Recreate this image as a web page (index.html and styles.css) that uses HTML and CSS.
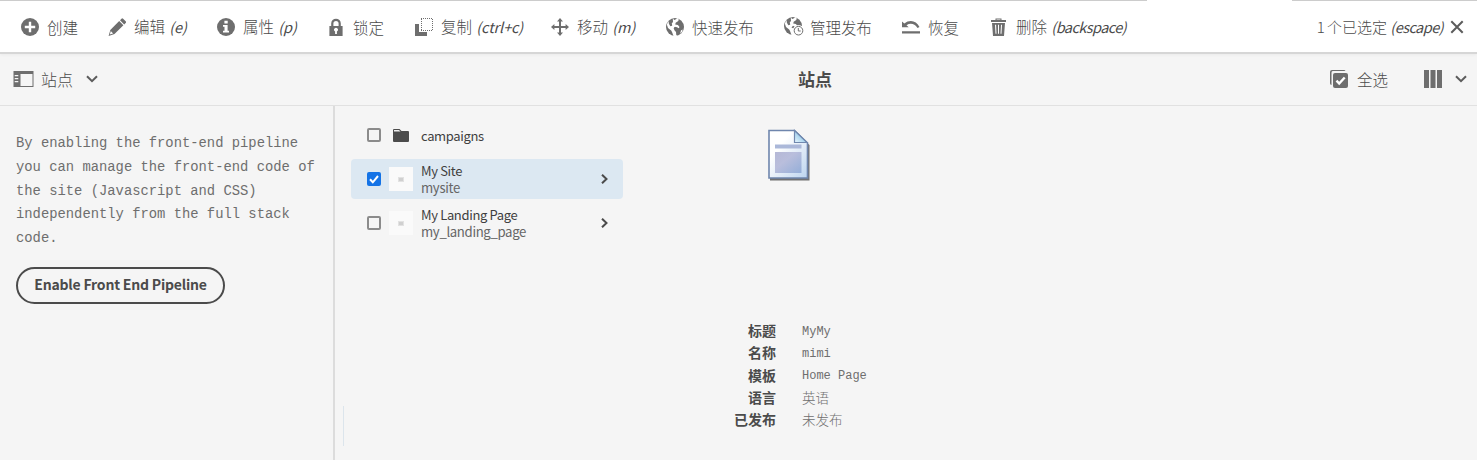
FILE: index.html
```html
<!DOCTYPE html>
<html lang="zh-CN">
<head>
<meta charset="utf-8">
<title>站点</title>
<link rel="stylesheet" href="styles.css">
</head>
<body>
<header class="actions">
  <nav class="action-list">
    <a class="action"><svg class="icon" viewBox="0 0 18 18"><circle cx="9" cy="9" r="9"/><path class="cut" d="M9 3.800v10.400M3.800 9h10.400"/></svg><span>创建</span></a>
    <a class="action"><svg class="icon" viewBox="0 0 18 18"><path d="M13.500.7q.8-.7 1.600.1l2.600 2.500q.7.8 0 1.600l-1.500 1.500-4.200-4.200zM11.200 3l4.200 4.200-8.900 8.900L.6 18l1.700-6zM2.800 13.100l-1 3.400 3.300-1.100z" fill-rule="evenodd"/></svg><span>编辑 <i>(e)</i></span></a>
    <a class="action"><svg class="icon" viewBox="0 0 18 18"><circle cx="9" cy="9" r="9"/><path class="white" d="M7.400 2.800h3.300v2.800H7.400zM6 7h4.600v5.700H12v1.700H6v-1.700h1.500V8.700H6z"/></svg><span>属性 <i>(p)</i></span></a>
    <a class="action"><svg class="icon" viewBox="0 0 18 18"><path d="M2.400 8h1.800V5.500a4.800 4.800 0 0 1 9.600 0V8h1.800v10H2.400zm4-0h5.200V5.600a2.600 2.600 0 0 0-5.200 0zm1.700 5.400V16h1.800v-2.600a1.900 1.900 0 1 0-1.800 0z" fill-rule="evenodd"/></svg><span>锁定</span></a>
    <a class="action"><svg class="icon" viewBox="0 0 18 18"><path d="M0 6h4v8h8v4H0z"/><path class="dots" d="M6 .5h12M6 12.500h12M6.500 1v12M17.500 1v12"/></svg><span>复制 <i>(ctrl+c)</i></span></a>
    <a class="action"><svg class="icon" viewBox="0 0 18 18"><path d="M9 0l3 3.400h-2V8h4.600V6L18 9l-3.400 3v-2H10v4.600h2L9 18l-3-3.400h2V10H3.400v2L0 9l3.400-3v2H8V3.400H6z"/></svg><span>移动 <i>(m)</i></span></a>
    <a class="action"><svg class="icon" viewBox="0 0 18 18"><circle cx="9" cy="9" r="9"/><path class="white" d="M6.800.3L8.200 2 10 1.300 11.300 0 12.800.8l-.5 2.200-2.600 1.800-.5 1.700 2.700.6 1.600 2-1 1.500L9 8.800 7.500 10.400l2 1.200 3 .2-1.300 2.200-.3 4H7.500L6 14l-.8-1.500L2 10 .8 6.500 2.500 3l.4 2.700 1.400 2.500 1.900-.5L5.800 5 7 4.200z"/><path d="M8 9.500l3-.2 3.300 2.100-1.300 3L10.300 17.500 10 14 8.200 12z"/><path class="white" d="M15 12.200l1.800-.8-.8 2.300-2 2.200z"/></svg><span>快速发布</span></a>
    <a class="action"><svg class="icon wide" viewBox="0 0 20 19"><circle cx="9" cy="9" r="9"/><path class="white" d="M6.800.3L8.200 2 10 1.300 11.300 0 12.800.8l-.5 2.200-2.600 1.800-.5 1.700 2.700.6 1.600 2-1 1.500L9 8.800 7.500 10.400l2 1.200 3 .2-1.300 2.200-.3 4H7.500L6 14l-.8-1.500L2 10 .8 6.500 2.500 3l.4 2.700 1.400 2.500 1.900-.5L5.800 5 7 4.200z"/><circle class="white" cx="14.500" cy="13.700" r="5.800"/><circle class="line" cx="14.500" cy="13.700" r="4.300"/><path class="line" d="M14.300 11v3h2.400"/></svg><span>管理发布</span></a>
    <a class="action"><svg class="icon" viewBox="0 0 18 18"><path d="M0 3.500l2.300 1.900C7.500 1.200 14.500 2.300 17.500 9l-2 1C12.500 5.500 8.300 4.700 4.500 7.300l2.200 2H0zM0 13.200h18v2.300H0z"/></svg><span>恢复</span></a>
    <a class="action"><svg class="icon" viewBox="0 0 18 18"><path d="M1 2h4.500V.5h6V2H16v2H1zm5.500-.6V2h4v-.6zM2 5h13l-1 13H3zM5 6.800l.5 9h1l-.4-9zm3 0v9h1v-9zm3 0l-.5 9h1l.5-9z" fill-rule="evenodd"/></svg><span>删除 <i class="long">(backspace)</i></span></a>
  </nav>
  <div class="selection"><span>1 个已选定 <i class="long">(escape)</i></span><svg class="close" viewBox="0 0 14 14"><path d="M1.300 1.300l11.400 11.400M12.700 1.300L1.300 12.700"/></svg></div>
</header>
<div class="titlebar">
  <div class="rail-toggle"><svg class="rail-icon" viewBox="0 0 20 16"><path d="M0 0h20v16H0zM7 3v12h12V3zM1.200 4v1.200h3.600V4zm0 3v1.200h3.600V7zm0 3v1.200h3.600V10z" fill-rule="evenodd"/></svg><span>站点</span><svg class="chevron" viewBox="0 0 12 8"><path d="M1 1.200l5 5 5-5"/></svg></div>
  <h1 class="title">站点</h1>
  <div class="view-tools"><svg class="icon" viewBox="0 0 18 18"><path d="M2 0h12a2 2 0 0 1 1.500 1H2.800A1.800 1.800 0 0 0 1.500 2.800V15A2 2 0 0 1 0 13V2a2 2 0 0 1 2-2z"/><rect x="3" y="3" width="15" height="15" rx="2"/><path class="tick" d="M6.500 10.700l2.700 2.800 5.500-6"/></svg><span class="all">全选</span><svg class="columns-icon" viewBox="0 0 18 18"><path d="M0 0h5v18H0zM6.500 0h5v18h-5zM13 0h5v18h-5z"/></svg><svg class="chevron" viewBox="0 0 12 8"><path d="M1 1.200l5 5 5-5"/></svg></div>
</div>
<main class="content">
  <aside class="rail">
    <p class="notice">By enabling the front-end pipeline<br>you can manage the front-end code of<br>the site (Javascript and CSS)<br>independently from the full stack<br>code.</p>
    <button class="enable">Enable Front End Pipeline</button>
  </aside>
  <section class="column">
    <div class="row"><span class="check"></span><svg class="folder" viewBox="0 0 16 13"><path d="M0 1Q0 0 1 0h5.500l2 2H15q1 0 1 1v9q0 1-1 1H1q-1 0-1-1z"/><path class="flap" d="M1 1h5l1.500 1.500H1z"/></svg><span class="name">campaigns</span></div>
    <div class="row selected"><span class="check on"><svg viewBox="0 0 14 14"><path d="M3 7.300l2.800 3L11 4"/></svg></span><span class="thumb"><b></b></span><span class="name">My Site<small>mysite</small></span><svg class="next" viewBox="0 0 7 10"><path d="M1 .7L5.500 5 1 9.300"/></svg></div>
    <div class="row"><span class="check"></span><span class="thumb"><b></b></span><span class="name">My Landing Page<small>my_landing_page</small></span><svg class="next" viewBox="0 0 7 10"><path d="M1 .7L5.500 5 1 9.300"/></svg></div>
    <div class="resize-mark"></div>
  </section>
  <section class="detail">
    <svg class="page-icon" viewBox="0 0 44 54">
      <defs>
        <linearGradient id="paper" x1="0" y1="0" x2="1" y2="1"><stop offset=".3" stop-color="#fff"/><stop offset="1" stop-color="#bcd4ee"/></linearGradient>
        <linearGradient id="block" x1="0" y1="0" x2="1" y2="1"><stop stop-color="#b5b8d6"/><stop offset=".4" stop-color="#b9bedc"/><stop offset="1" stop-color="#94aed8"/></linearGradient>
        <linearGradient id="fold" x1="0" y1="1" x2="1" y2="0"><stop stop-color="#eaf8ff"/><stop offset="1" stop-color="#5ba8d8"/></linearGradient>
      </defs>
      <path d="M3 3h25l14.500 13v35.500H3z" fill="#444" opacity=".75"/>
      <path d="M2 1.500h25.500l13 12.500v35h-38.500z" fill="url(#paper)" stroke="#6f86ad" stroke-width="1.600"/>
      <path d="M27.500 1.500V13.500h12.500z" fill="url(#fold)" stroke="#7088ae" stroke-width="1.200"/>
      <path d="M8 15.500h26.500v4H8z" fill="#abb8d9"/><path d="M8 23h26.500v21H8z" fill="url(#block)"/>
    </svg>
    <dl class="facts">
      <dt>标题</dt><dd>MyMy</dd>
      <dt>名称</dt><dd>mimi</dd>
      <dt>模板</dt><dd>Home Page</dd>
      <dt>语言</dt><dd class="zh">英语</dd>
      <dt>已发布</dt><dd class="zh">未发布</dd>
    </dl>
  </section>
</main>
</body>
</html>
```
FILE: styles.css
```css
* { box-sizing: border-box; }
body {
  margin: 0;
  width: 1477px;
  height: 460px;
  overflow: hidden;
  display: flex;
  flex-direction: column;
  background: #f5f5f5;
  color: #4b4b4b;
  font: 300 15.5px/20px "Noto Sans CJK SC", sans-serif;
}
svg { display: block; flex: none; fill: #6e6e6e; }
.actions {
  position: relative;
  height: 54px;
  flex: none;
  display: flex;
  justify-content: space-between;
  align-items: center;
  padding: 1px 13px 0 21px;
  background: linear-gradient(90deg, #ccc 1147px, #fff 1147px 1292px, #ccc 1292px) top / 100% 1px no-repeat, #fff;
  border-bottom: 2px solid #d6d6d6;
  box-shadow: 0 1px 3px #0000000c;
}
.action-list {
  display: grid;
  grid-template-columns: 87px 109px 110px 88px 136px 115px 118px 118px 88px auto;
}
.action { display: flex; align-items: center; gap: 8px; white-space: nowrap; }
.action span { letter-spacing: -.05px; }
.icon { width: 18px; height: 18px; }
.wide { width: 20px; height: 19px; margin-right: -2px; }
i { font-size: 14.5px; font-weight: 400; letter-spacing: -.1px; margin-left: 1px; }
.action .long, .selection .long { letter-spacing: -.55px; }
.cut, .tick { fill: none; stroke: #fff; stroke-width: 2.4; }
.white { fill: #fff; }
.line { fill: none; stroke: #6e6e6e; stroke-width: 1; }
.dots { fill: none; stroke: #6e6e6e; stroke-dasharray: 1 1; }
.selection { display: flex; align-items: center; gap: 7px; font-size: 15px; word-spacing: -1px; }
.close { width: 14px; height: 14px; fill: none; stroke: #5c5c5c; stroke-width: 2; }
.titlebar {
  height: 52px;
  flex: none;
  display: grid;
  grid-template-columns: 798px auto 1fr;
  align-items: center;
  padding: 0 10px 2px 0;
  border-bottom: 1px solid #e1e1e1;
}
.rail-toggle, .view-tools { display: flex; align-items: center; }
.rail-toggle { padding: 1px 0 0 13px; font-size: 16px; }
.rail-icon { width: 21px; height: 16px; margin-right: 7px; }
.chevron { width: 12px; height: 8px; margin-left: 13px; fill: none; stroke: #5c5c5c; stroke-width: 2; }
.title { margin: 0; font-size: 17px; line-height: 24px; }
.view-tools { justify-content: flex-end; }
.all { margin: 0 36px 0 9px; }
.columns-icon { width: 18px; height: 18px; }
.content { flex: 1; display: grid; grid-template-columns: 335px 306px 1fr; min-height: 0; }
.rail { padding: 26px 0 0 16px; border-right: 2px solid #dcdcdc; }
.notice {
  margin: 0 0 16px;
  color: #6e6e6e;
  font: 13.83px/23.8px "Liberation Mono", monospace;
  white-space: nowrap;
}
.enable {
  display: block;
  width: 209px;
  height: 37px;
  padding: 0 0 3px;
  border: 2px solid #4b4b4b;
  border-radius: 19px;
  background: transparent;
  color: #4b4b4b;
  font: bold 14px/20px "Noto Sans CJK SC", sans-serif;
  letter-spacing: -.2px;
  white-space: nowrap;
}
.column { display: flex; flex-direction: column; gap: 4px; padding: 9px 18px 0 16px; position: relative; }
.row { height: 40px; flex: none; display: flex; align-items: center; padding: 0 15px 0 16px; border-radius: 4px; }
.selected { background: #dce8f2; }
.check { width: 14px; height: 14px; flex: none; border: 2px solid #8b8b8b; border-radius: 2px; }
.on { border: 0; background: #1473e6; }
.on svg { width: 14px; height: 14px; fill: none; stroke: #fff; stroke-width: 2; }
.folder { width: 16px; height: 13px; margin: 0 12px; fill: #4b4b4b; }
.flap { fill: #eee; }
.thumb { width: 24px; height: 24px; flex: none; margin: 0 8px; display: grid; place-items: center; background: #fafafa; }
.thumb b { width: 6px; height: 5px; background: #d0d0d0; border: 1px solid #e2e2e2; }
.name { flex: 1; font: 400 13px/17px "Noto Sans CJK SC", sans-serif; letter-spacing: -.35px; color: #3f3f3f; white-space: nowrap; }
.name small { display: block; font-size: 13.2px; color: #666; }
.next { width: 7px; height: 10px; fill: none; stroke: #4b4b4b; stroke-width: 2; }
.resize-mark { width: 1px; height: 40px; position: absolute; left: 8px; bottom: 14px; background: #dce5ec; }
.detail { display: flex; flex-direction: column; padding: 23px 0 0 84px; }
.page-icon { width: 44px; height: 54px; margin-left: 42px; }
.facts { margin: 136px 0 0; display: grid; grid-template-columns: 51px auto; column-gap: 26px; grid-auto-rows: 22.3px; align-items: center; }
.facts dt { text-align: right; font: bold 14px/20px "Noto Sans CJK SC", sans-serif; white-space: nowrap; }
.facts dd { margin: 0; padding-top: 3px; color: #6e6e6e; font: 12px/20px "Liberation Mono", monospace; }
.facts .zh { padding-top: 0; font: 300 13.5px/20px "Noto Sans CJK SC", sans-serif; }
```
